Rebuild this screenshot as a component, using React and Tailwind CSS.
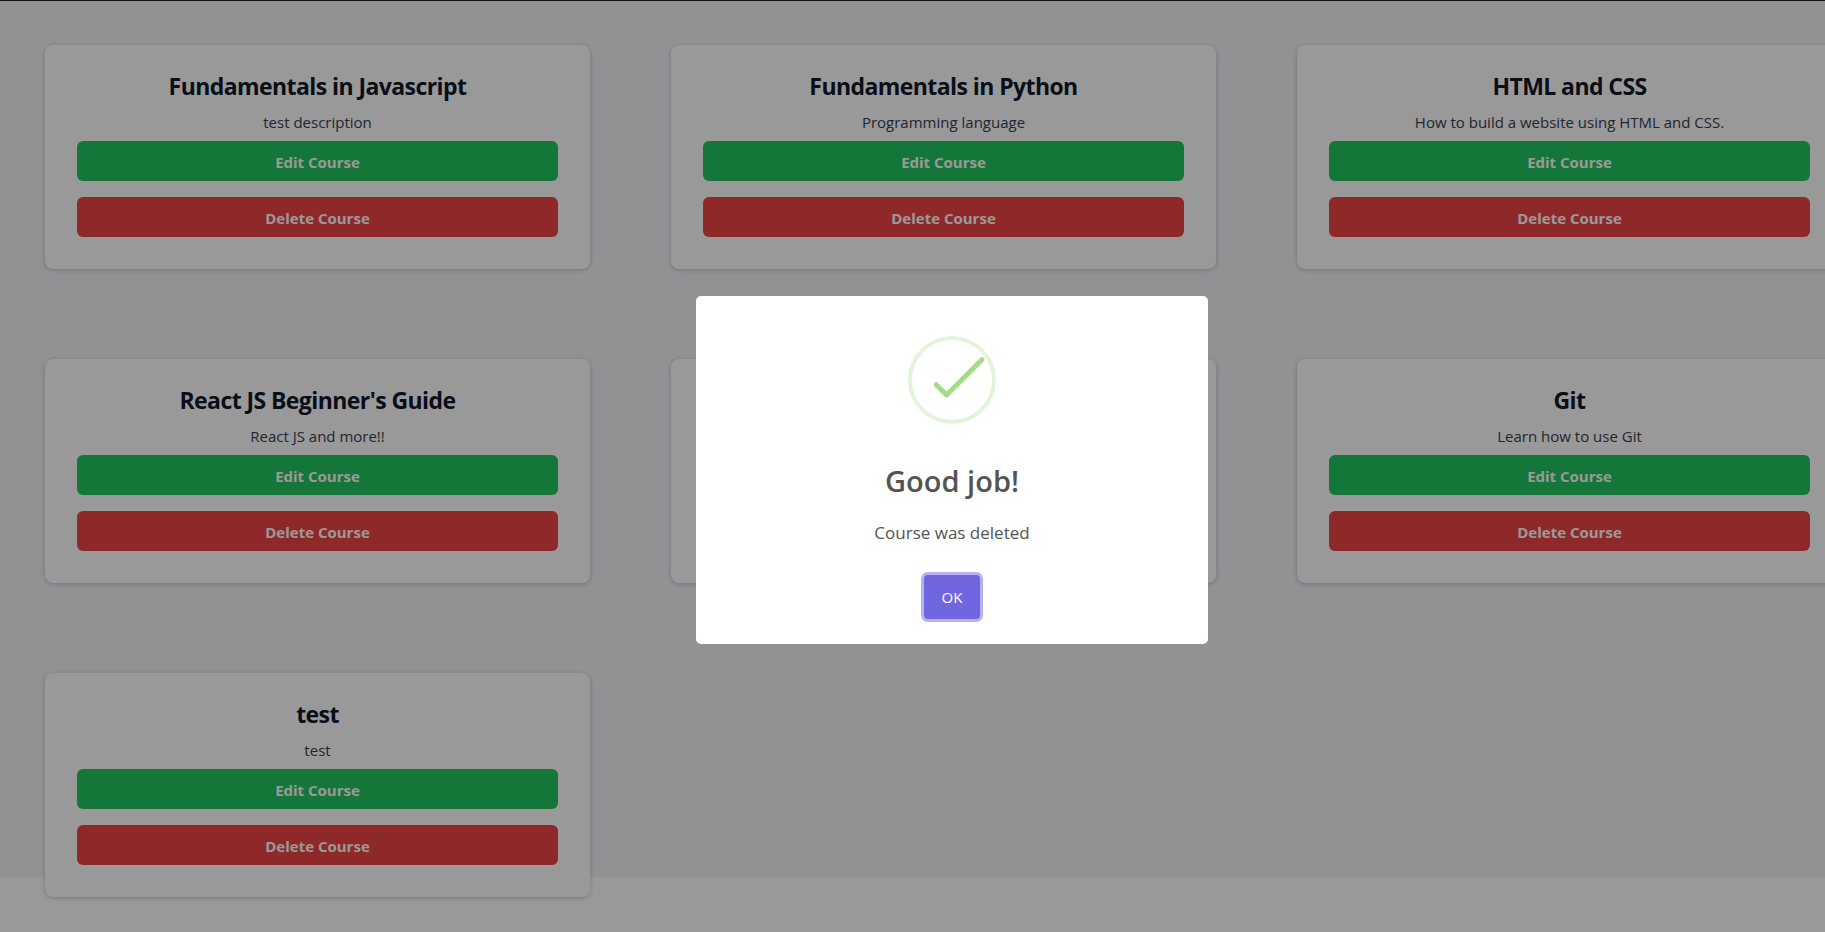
const courses = [
  { id: 1, title: "Fundamentals in Javascript", description: "test description" },
  { id: 2, title: "Fundamentals in Python", description: "Programming language" },
  { id: 3, title: "HTML and CSS", description: "How to build a website using HTML and CSS." },
  { id: 4, title: "React JS Beginner's Guide", description: "React JS and more!!" },
  { id: 5 },
  { id: 6, title: "Git", description: "Learn how to use Git" },
  { id: 7, title: "test", description: "test" },
];

function CourseCard({ title, description }) {
  return (
    <article className="flex flex-col rounded-lg bg-white px-8 pt-[25px] pb-8 text-center shadow-[0_1px_4px_rgba(45,55,120,0.28)]">
      {title && (
        <>
          <h2 className="mb-2 text-[23px] leading-8 font-bold tracking-tight text-gray-900">{title}</h2>
          <p className="mb-[7px] text-[15px] leading-6 text-gray-700">{description}</p>
          <button type="button" className="mb-4 h-10 rounded-md bg-[#22c55e] pt-0.5 text-[15px] font-bold text-white">
            Edit Course
          </button>
          <button type="button" className="h-10 rounded-md bg-[#ef4444] pt-0.5 text-[15px] font-bold text-white">
            Delete Course
          </button>
        </>
      )}
    </article>
  );
}

function SuccessIcon() {
  return (
    <svg viewBox="0 0 88 88" className="size-[88px]" fill="none" aria-hidden="true">
      <circle cx="44" cy="44" r="42" stroke="#a5dc86" strokeOpacity="0.3" strokeWidth="4" />
      <path d="M5.5 24.5l2 2M61.5 80l2 2" stroke="#a5dc86" strokeOpacity="0.4" strokeWidth="0.6" />
      <path d="M28.2 48.7L38.6 59L74 23.6" stroke="#a5dc86" strokeWidth="5" strokeLinecap="round" strokeLinejoin="round" />
    </svg>
  );
}

function SuccessDialog() {
  return (
    <div className="fixed inset-0 flex items-center justify-center bg-black/40 pt-2 pl-[79px]">
      <div
        role="dialog"
        aria-modal="true"
        aria-labelledby="dialog-title"
        className="flex w-full max-w-lg flex-col items-center rounded-[5px] bg-white px-4 pt-10 pb-[25px] text-[#545454]"
      >
        <SuccessIcon />
        <h2 id="dialog-title" className="mt-[37px] text-[29px] leading-10 font-semibold">
          Good job!
        </h2>
        <p className="mt-5 text-[17px] leading-6">Course was deleted</p>
        <button
          type="button"
          className="mt-[30px] h-11 w-14 rounded bg-[#7066e0] text-[15px] text-white ring-3 ring-[#7066e0]/50"
        >
          OK
        </button>
      </div>
    </div>
  );
}

export default function App() {
  return (
    <div className="min-h-screen overflow-x-clip border-t border-[#1a1520] bg-white font-['Open_Sans','Noto_Sans',sans-serif]">
      <main className="h-[94vh] bg-[#f2f4f7] pt-11 pl-[45px]">
        <div className="-mr-[17px] grid grid-cols-3 gap-x-[81px] gap-y-[90px]">
          {courses.map((course) => (
            <CourseCard key={course.id} {...course} />
          ))}
        </div>
      </main>
      <SuccessDialog />
    </div>
  );
}
